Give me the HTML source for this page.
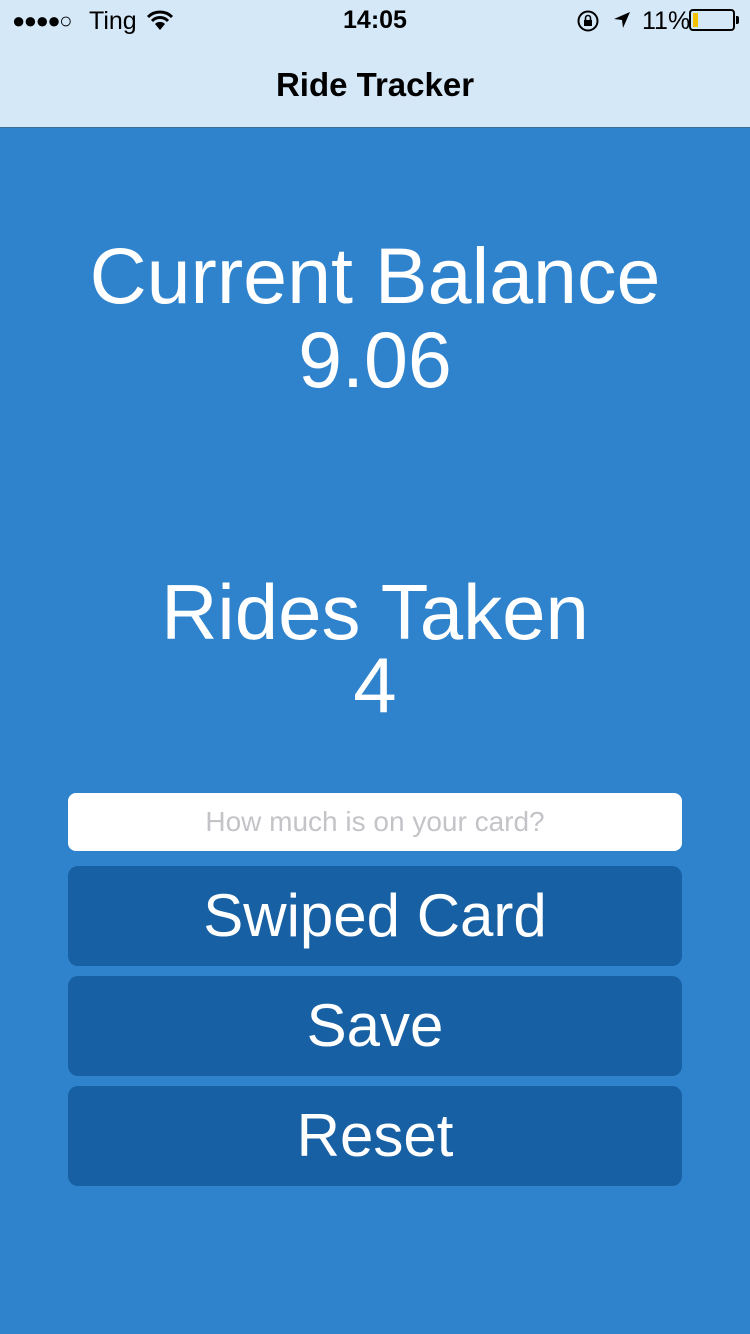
<!DOCTYPE html>
<html><head><meta charset="utf-8"><style>
*{margin:0;padding:0;box-sizing:border-box}
body{width:750px;height:1334px;background:#2f83cd;font-family:"Liberation Sans",sans-serif;position:relative;overflow:hidden;color:#fff}
.top{position:absolute;left:0;top:0;width:750px;height:128px;background:#d5e8f8;border-bottom:1px solid #3a6d99;color:#000}
.abs{position:absolute;white-space:nowrap}
.c{left:0;width:750px;text-align:center}
.btn{position:absolute;left:68px;width:614px;height:100px;background:#1760a3;border-radius:10px;text-align:center;font-size:60px;line-height:100px;color:#fff}
</style></head><body>
<div class="top">
 <div class="abs" style="left:12px;top:8px;font-size:22px;letter-spacing:-1.5px">●●●●○</div>
 <div class="abs" style="left:89px;top:7px;font-size:25px">Ting</div>
 <svg class="abs" style="left:146px;top:10px" width="28" height="20" viewBox="0 0 28 20"><path d="M2 7 A17 17 0 0 1 26 7" stroke="#000" stroke-width="3" fill="none"/><path d="M6 11 A11 11 0 0 1 22 11" stroke="#000" stroke-width="3" fill="none"/><path d="M14 20 L9 14 A7 7 0 0 1 19 14 Z" fill="#000"/></svg>
 <div class="abs c" style="top:6px;font-size:25px;font-weight:bold">14:05</div>
 <svg class="abs" style="left:576px;top:9px" width="24" height="24" viewBox="0 0 24 24"><circle cx="12" cy="12" r="9.5" stroke="#000" stroke-width="2" fill="none"/><rect x="8" y="11" width="8" height="6" fill="#000"/><path d="M9.5 11V9a2.5 2.5 0 0 1 5 0v2" stroke="#000" stroke-width="1.6" fill="none"/></svg>
 <svg class="abs" style="left:612px;top:10px" width="20" height="20" viewBox="0 0 20 20"><path d="M18 2 L2 9 L10 10 L11 18 Z" fill="#000"/></svg>
 <div class="abs" style="left:642px;top:7px;font-size:25px">11%</div>
 <div class="abs" style="left:689px;top:9px;width:46px;height:22px;border:2px solid #000;border-radius:4px"><div style="position:absolute;left:2px;top:2px;width:5px;height:14px;background:#f2c200"></div></div>
 <div class="abs" style="left:736px;top:16px;width:3px;height:8px;background:#000;border-radius:0 2px 2px 0"></div>
 <div class="abs c" style="top:66px;font-size:33px;font-weight:bold">Ride Tracker</div>
</div>
<div class="abs c" style="top:234px;font-size:79px;line-height:84px">Current Balance<br>9.06</div>
<div class="abs c" style="top:576px;font-size:78px;line-height:73px">Rides Taken<br>4</div>
<div class="abs" style="left:68px;top:793px;width:614px;height:58px;background:#fff;border-radius:8px;text-align:center;line-height:58px;font-size:28px;color:#c4c4c8">How much is on your card?</div>
<div class="btn" style="top:866px">Swiped Card</div>
<div class="btn" style="top:976px">Save</div>
<div class="btn" style="top:1086px">Reset</div>
</body></html>
